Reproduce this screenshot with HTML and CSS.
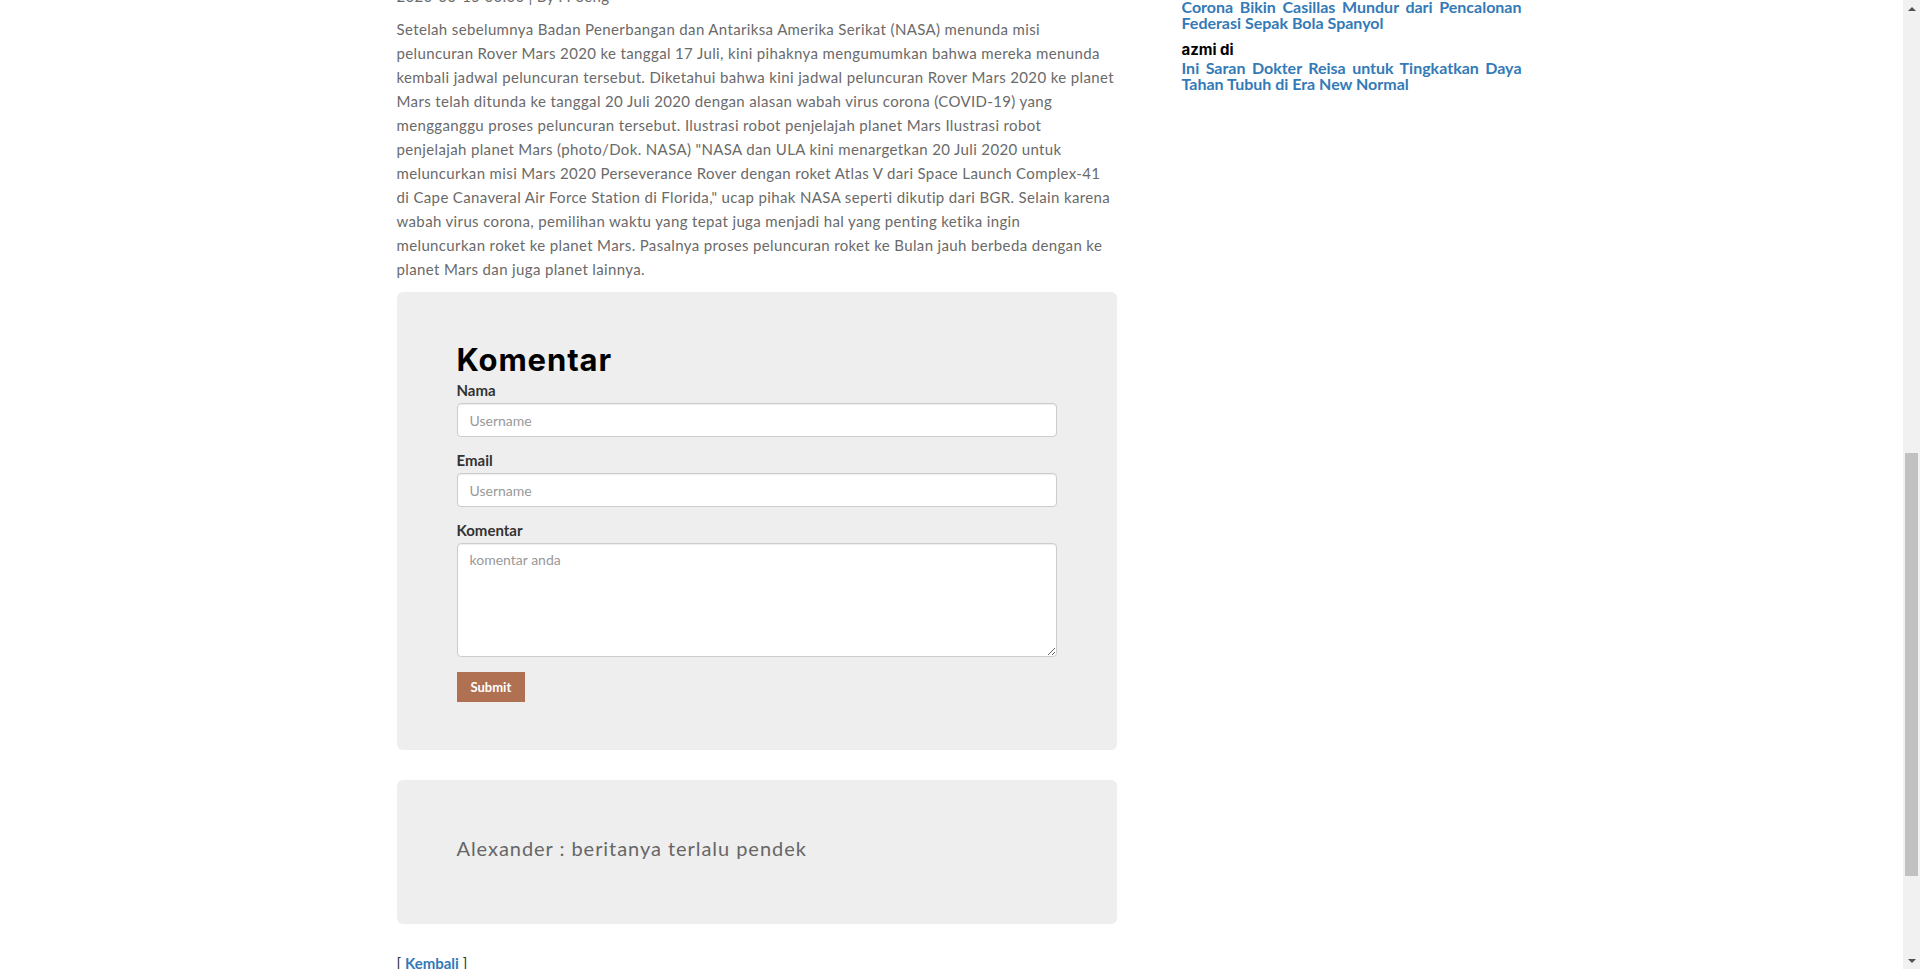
FILE: index.html
```html
<!DOCTYPE html>
<html lang="id">
<head>
<meta charset="utf-8">
<title>Berita</title>
<link rel="stylesheet" href="styles.css">
</head>
<body>
<div class="page">
  <div class="viewport">
    <div class="container">
      <main class="main">
        <p class="date">2020-06-15 00:00 | By : Poeng</p>
        <p class="article">Setelah sebelumnya Badan Penerbangan dan Antariksa Amerika Serikat (NASA) menunda misi<br>
peluncuran Rover Mars 2020 ke tanggal 17 Juli, kini pihaknya mengumumkan bahwa mereka menunda<br>
kembali jadwal peluncuran tersebut. Diketahui bahwa kini jadwal peluncuran Rover Mars 2020 ke planet<br>
Mars telah ditunda ke tanggal 20 Juli 2020 dengan alasan wabah virus corona (COVID-19) yang<br>
mengganggu proses peluncuran tersebut. Ilustrasi robot penjelajah planet Mars Ilustrasi robot<br>
penjelajah planet Mars (photo/Dok. NASA) "NASA dan ULA kini menargetkan 20 Juli 2020 untuk<br>
meluncurkan misi Mars 2020 Perseverance Rover dengan roket Atlas V dari Space Launch Complex-41<br>
di Cape Canaveral Air Force Station di Florida," ucap pihak NASA seperti dikutip dari BGR. Selain karena<br>
wabah virus corona, pemilihan waktu yang tepat juga menjadi hal yang penting ketika ingin<br>
meluncurkan roket ke planet Mars. Pasalnya proses peluncuran roket ke Bulan jauh berbeda dengan ke<br>
planet Mars dan juga planet lainnya.</p>

        <section class="card card-form">
          <h2 class="card-title">Komentar</h2>
          <form class="comment-form">
            <div class="form-group">
              <label class="form-label" for="nama">Nama</label>
              <input class="form-control" id="nama" type="text" placeholder="Username">
            </div>
            <div class="form-group">
              <label class="form-label" for="email">Email</label>
              <input class="form-control" id="email" type="text" placeholder="Username">
            </div>
            <div class="form-group">
              <label class="form-label" for="komentar">Komentar</label>
              <textarea class="form-control form-textarea" id="komentar" rows="5" placeholder="komentar anda"></textarea>
            </div>
            <button class="btn-submit" type="button">Submit</button>
          </form>
        </section>

        <section class="card card-comment">
          <p class="comment-text">Alexander : beritanya terlalu pendek</p>
        </section>

        <p class="back">[ <a class="link" href="#">Kembali</a> ]</p>
      </main>

      <aside class="sidebar">
        <div class="side-item">
          <a class="side-title" href="#">Corona Bikin Casillas Mundur dari Pencalonan Federasi Sepak Bola Spanyol</a>
        </div>
        <div class="side-item">
          <div class="side-author">azmi di</div>
          <a class="side-title" href="#">Ini Saran Dokter Reisa untuk Tingkatkan Daya Tahan Tubuh di Era New Normal</a>
        </div>
      </aside>
    </div>
  </div>

  <div class="scrollbar">
    <div class="sb-btn"><span class="arrow-up"></span></div>
    <div class="sb-track"><div class="sb-thumb"></div></div>
    <div class="sb-btn"><span class="arrow-down"></span></div>
  </div>
</div>
</body>
</html>
```

FILE: styles.css
```css
html, body {
  margin: 0;
  padding: 0;
  height: 969px;
  overflow: hidden;
  background: #fff;
}

body {
  font-family: "Lato", "Liberation Sans", sans-serif;
  color: #333;
}

.page {
  display: flex;
  height: 969px;
}

.viewport {
  flex: 1;
  overflow: hidden;
}

.container {
  width: 1170px;
  margin: 0 auto;
  display: flex;
  align-items: flex-start;
}

.main {
  width: 720px;
  padding: 0 30px;
  flex: none;
}

.date {
  margin: -16px 0 9px;
  font-size: 15px;
  line-height: 24px;
  color: #6a6a6a;
  letter-spacing: 0.3px;
}

.article {
  margin: 0 0 11px;
  font-family: "Lato", sans-serif;
  font-size: 15px;
  line-height: 24px;
  letter-spacing: 0.36px;
  white-space: nowrap;
  color: #6a6a6a;
}

.card {
  background: #eeeeee;
  border-radius: 6px;
}

.card-form {
  padding: 51px 60px 48px;
}

.card-title {
  margin: 0 0 6px;
  font-family: "Inter", "Noto Sans", sans-serif;
  font-weight: 700;
  font-size: 31px;
  line-height: 33px;
  letter-spacing: 0.9px;
  color: #000;
}

.comment-form {
  margin: 0;
}

.form-group {
  margin-bottom: 15px;
}

.form-label {
  display: block;
  margin-bottom: 4px;
  font-family: "Lato", sans-serif;
  font-weight: 700;
  font-size: 15px;
  line-height: 17px;
  color: #333;
}

.form-control {
  display: block;
  box-sizing: border-box;
  width: 100%;
  height: 34px;
  margin: 0;
  padding: 6px 12px;
  font-family: "Lato", sans-serif;
  font-size: 14px;
  line-height: 20px;
  color: #555;
  background: #fff;
  border: 1px solid #ccc;
  border-radius: 4px;
  box-shadow: inset 0 1px 1px rgba(0, 0, 0, 0.075);
  outline: none;
}

.form-control::placeholder {
  color: #999;
  opacity: 1;
}

.form-textarea {
  height: 114px;
  resize: vertical;
}

.btn-submit {
  display: block;
  height: 30px;
  padding: 0 14px;
  margin: 0;
  border: 0;
  border-radius: 0;
  background: #b07152;
  color: #fff;
  font-family: "Lato", sans-serif;
  font-weight: 700;
  font-size: 13px;
  line-height: 30px;
}

.card-comment {
  margin-top: 30px;
  padding: 56px 60px 64px;
}

.comment-text {
  margin: 0;
  font-family: "Lato", sans-serif;
  font-size: 20px;
  line-height: 24px;
  letter-spacing: 0.95px;
  color: #666;
}

.back {
  margin: 29px 0 0;
  font-size: 15px;
  line-height: 21px;
  color: #333;
}

.link {
  color: #337ab7;
  text-decoration: none;
  font-weight: 700;
}

.sidebar {
  width: 340px;
  padding: 0 15px 0 35px;
  flex: none;
}

.side-item {
  margin-bottom: 9px;
}

.side-item:first-child {
  margin-top: -1px;
}

.side-author {
  font-family: "Inter", sans-serif;
  font-weight: 700;
  font-size: 15px;
  line-height: 20px;
  color: #000;
  margin: 1px 0 0;
}

.side-title {
  display: block;
  font-family: "Lato", sans-serif;
  font-weight: 700;
  font-size: 16px;
  line-height: 16px;
  color: #337ab7;
  text-decoration: none;
  text-align: justify;
}

.scrollbar {
  width: 17px;
  flex: none;
  background: #f1f1f1;
  display: flex;
  flex-direction: column;
}

.sb-btn {
  height: 17px;
  display: flex;
  align-items: center;
  justify-content: center;
}

.arrow-up {
  width: 0;
  height: 0;
  border-left: 4px solid transparent;
  border-right: 4px solid transparent;
  border-bottom: 4px solid #505050;
}

.arrow-down {
  width: 0;
  height: 0;
  border-left: 4px solid transparent;
  border-right: 4px solid transparent;
  border-top: 4px solid #505050;
}

.sb-track {
  flex: 1;
}

.sb-thumb {
  margin: 436px 2px 0;
  height: 423px;
  background: #c1c1c1;
}
```
